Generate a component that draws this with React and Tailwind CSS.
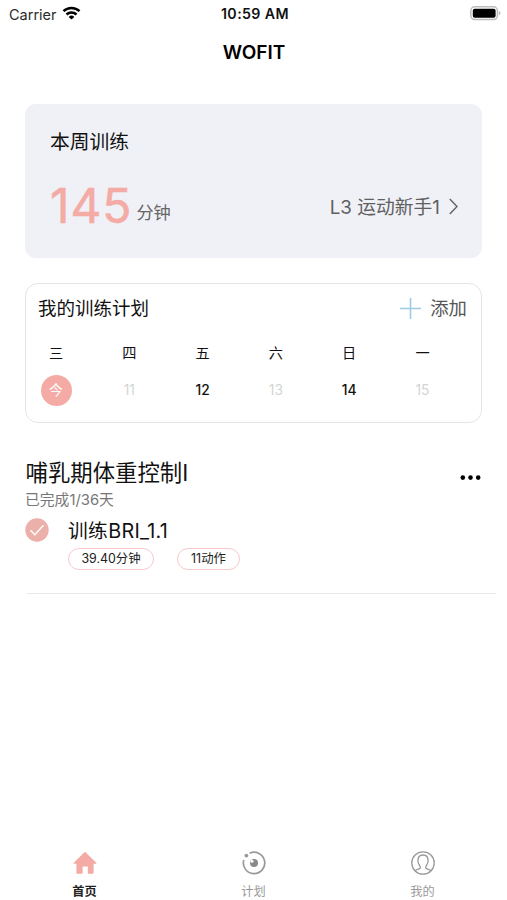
const days = [
  { week: '三', label: '今', today: true },
  { week: '四', label: '11' },
  { week: '五', label: '12', active: true },
  { week: '六', label: '13' },
  { week: '日', label: '14', active: true },
  { week: '一', label: '15' },
];

function StatusBar() {
  return (
    <div className="flex h-[28px] items-center pl-[9px] pr-[6px]">
      <div className="flex flex-1 items-center gap-[5px]">
        <span className="pt-[1px] text-[14.5px] text-[#2b2b2b]">Carrier</span>
        <svg className="mb-[2px] h-[14px] w-[19px]" viewBox="0 0 18 14" fill="none" stroke="#000" strokeWidth="2.5">
          <path d="M1 5.2a11.4 11.4 0 0 1 16 0" />
          <path d="M4 8.5a7.2 7.2 0 0 1 10 0" />
          <path d="M9 13.6 6.2 10.9a4 4 0 0 1 5.6 0Z" fill="#000" stroke="none" />
        </svg>
      </div>
      <span className="text-[14.2px] font-semibold tracking-[0.4px] text-[#111]">10:59 AM</span>
      <div className="flex flex-1 justify-end">
        <svg className="mb-[2px] h-[15px] w-[31px]" viewBox="0 0 31 15">
          <rect x="0.8" y="0.8" width="26.6" height="12.8" rx="4" fill="#fff" stroke="#bdbdbd" strokeWidth="1.5" />
          <rect x="2.8" y="2.7" width="22.8" height="9" rx="2" fill="#000" />
          <path d="M28.8 5v4.4c1-.4 1.7-1.2 1.7-2.2S29.8 5.4 28.8 5Z" fill="#bdbdbd" />
        </svg>
      </div>
    </div>
  );
}

function WeekCard() {
  return (
    <div className="mt-[25px] h-[154px] rounded-[11px] bg-[#f0f1f7] pt-[24px] pr-[24px] pl-[25px]">
      <h2 className="text-[19.8px] leading-[28px] text-[#111]">本周训练</h2>
      <div className="mt-[20px] flex h-[60px] items-center justify-between">
        <div className="flex items-center">
          <span className="text-[48px] leading-[60px] tracking-[0.9px] text-[#f4aba5] [-webkit-text-stroke:0.6px_#f4aba5]">145</span>
          <span className="mt-[13px] ml-[4px] text-[17.2px] leading-[24px] text-[#666]">分钟</span>
        </div>
        <button className="flex items-center gap-[9px] text-[18.8px] leading-[26px] text-[#606060]">
          <span className="pt-[3px]">L3 运动新手1</span>
          <svg className="h-[17px] w-[9px]" viewBox="0 0 9 17" fill="none" stroke="#666" strokeWidth="1.5">
            <path d="m.8 1 7.2 7.5L.8 16" />
          </svg>
        </button>
      </div>
    </div>
  );
}

function PlanCard() {
  return (
    <div className="mt-[25px] h-[140px] rounded-[13px] border border-[#e5e5e7] pt-[11px]">
      <div className="flex h-[26px] items-center justify-between pr-[14px] pl-[12px]">
        <h2 className="text-[18.5px] leading-[26px] text-[#111]">我的训练计划</h2>
        <button className="flex items-center gap-[9px] text-[18.4px] leading-[26px] text-[#555]">
          <svg className="h-[21px] w-[21px]" viewBox="0 0 21 21" stroke="#9ccbe3" strokeWidth="1.6">
            <path d="M10.5 0v21M0 10.5h21" />
          </svg>
          <span>添加</span>
        </button>
      </div>
      <div className="flex justify-between pt-[21px] pr-[43px] pl-[14.5px]">
        {days.map((day) => (
          <div key={day.week} className="flex w-[31px] flex-col items-center">
            <span className="text-[14.2px] leading-[22px] text-[#111]">{day.week}</span>
            <span
              className={`mt-[11px] flex h-[31px] w-[31px] items-center justify-center rounded-full text-[13.8px] ${
                day.today
                  ? 'bg-[#f5aba5] text-white'
                  : day.active
                    ? 'font-medium text-[#111]'
                    : 'text-[#d4d4d4]'
              }`}
            >
              {day.label}
            </span>
          </div>
        ))}
      </div>
    </div>
  );
}

function Program() {
  return (
    <section className="mt-[35px]">
      <div className="flex h-[30px] items-center justify-between">
        <h2 className="pl-[0.5px] text-[22.4px] leading-[30px] text-[#111]">哺乳期体重控制I</h2>
        <svg className="mt-[9px] mr-[1px] h-[6px] w-[21px]" viewBox="0 0 21 6" fill="#000">
          <circle cx="2.8" cy="2.6" r="2.3" />
          <circle cx="10.5" cy="2.6" r="2.3" />
          <circle cx="18.2" cy="2.6" r="2.3" />
        </svg>
      </div>
      <p className="mt-[2px] text-[14.8px] leading-[20px] text-[#777]">已完成1/36天</p>
      <div className="mt-[7px] flex">
        <svg className="mt-[1px] h-[24px] w-[24px]" viewBox="0 0 24 24" fill="none">
          <circle cx="12" cy="12" r="11.7" fill="#ebb0a9" />
          <path d="m5.5 12.3 4.3 4.5 8.7-9.6" stroke="#fff" strokeWidth="1.4" />
        </svg>
        <div className="ml-[19px]">
          <h3 className="text-[19.8px] leading-[28px] tracking-[0.3px] text-[#111]">训练BRI_1.1</h3>
          <div className="mt-[3px] flex gap-[23px] text-[12.4px] text-[#222]">
            <span className="flex h-[22px] w-[86px] items-center justify-center rounded-full border border-[#f8c9cd] pt-[1px]">39.40分钟</span>
            <span className="flex h-[22px] w-[63px] items-center justify-center rounded-full border border-[#f8c9cd] pt-[1px]">11动作</span>
          </div>
        </div>
      </div>
      <div className="mt-[23px] -mr-[14px] ml-[2px] border-t border-[#e8e8e8]" />
    </section>
  );
}

function TabBar() {
  return (
    <nav className="grid h-[60px] grid-cols-3 text-[12.2px] leading-[18px] text-[#999]">
      <a className="flex flex-col items-center gap-[8px] pt-[11px] font-bold text-[#222]">
        <svg className="h-[24px] w-[24px]" viewBox="0 0 24 24" fill="#f4aba5">
          <path d="M12 .8 23.3 11.8c.4.5.1.9-.4.9h-2.3v9.1c0 .6-.4 1-1 1h-4.8v-7.3H9.6v7.3H4.4c-.6 0-1-.4-1-1v-9.1H1.1c-.5 0-.8-.4-.4-.9Z" />
        </svg>
        首页
      </a>
      <a className="flex flex-col items-center gap-[8px] pt-[11px]">
        <svg className="h-[24px] w-[24px]" viewBox="0 0 24 24" fill="none">
          <path d="M7.6 2.2A10.7 10.7 0 1 1 1.8 8.9" stroke="#999" strokeWidth="1.7" />
          <circle cx="4.4" cy="4.6" r="1.9" fill="#999" />
          <circle cx="12" cy="12" r="4" fill="#8a8a8a" />
          <circle cx="10" cy="10.3" r="1.5" fill="#fff" />
        </svg>
        计划
      </a>
      <a className="flex flex-col items-center gap-[8px] pt-[11px]">
        <svg className="h-[24px] w-[24px]" viewBox="0 0 24 24" fill="none" stroke="#999" strokeWidth="1.3">
          <circle cx="12" cy="12" r="11.2" />
          <path d="M4.2 19.8c.9-1.5 5.2-1.4 5.2-3.3 0-1.8-2.5-3-2.5-6.700 0-3.600 2-5.800 5.100-5.800s5.100 2.200 5.100 5.800c0 3.700-2.500 4.900-2.500 6.700 0 1.900 4.300 1.800 5.200 3.300" />
        </svg>
        我的
      </a>
    </nav>
  );
}

export default function App() {
  return (
    <div className="flex h-[900px] w-[507px] flex-col overflow-hidden bg-white font-['Inter','Noto_Sans_CJK_SC',sans-serif]">
      <StatusBar />
      <header className="flex h-[51px] items-center justify-center pl-[1px] text-[19px] font-semibold text-black">WOFIT</header>
      <main className="flex-1 px-[25px]">
        <WeekCard />
        <PlanCard />
        <Program />
      </main>
      <TabBar />
    </div>
  );
}
